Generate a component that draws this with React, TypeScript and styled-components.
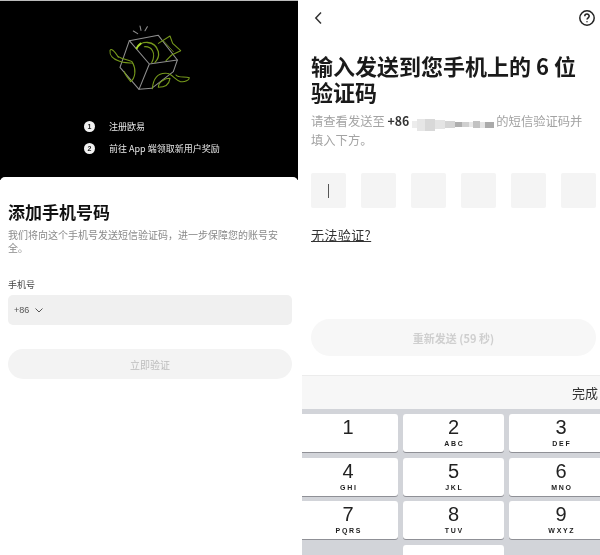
import React from 'react';
import styled, { createGlobalStyle } from 'styled-components';

const GlobalStyle = createGlobalStyle`
  html, body {
    margin: 0;
    padding: 0;
    background: #fff;
  }
  * {
    box-sizing: border-box;
  }
`;

const Page = styled.div`
  display: flex;
  gap: 4px;
  width: 600px;
  height: 555px;
  overflow: hidden;
  background: #fff;
  color: #111;
  font-family: "Noto Sans CJK SC", "Noto Sans", sans-serif;
  filter: blur(0.6px);
`;

const LeftScreen = styled.section`
  display: flex;
  flex-direction: column;
  width: 298px;
  background: #fff;
`;

const Hero = styled.div`
  display: flex;
  flex-direction: column;
  align-items: center;
  height: 180px;
  padding-top: 9px;
  margin-bottom: -3px;
  border-top: 1px solid #bbb;
  background: #000;
`;

const Art = styled.svg`
  width: 120px;
  height: 90px;
  margin-left: 2px;
  flex: none;
`;

const Steps = styled.ol`
  display: flex;
  flex-direction: column;
  gap: 8px;
  align-self: flex-start;
  margin: 19px 0 0 84px;
  padding: 0;
  list-style: none;
`;

const Step = styled.li`
  display: flex;
  align-items: center;
  gap: 14px;
  height: 14px;
  color: #e8e8e8;
  font-size: 9px;
`;

const StepDot = styled.span`
  display: flex;
  align-items: center;
  justify-content: center;
  width: 11px;
  height: 11px;
  border-radius: 50%;
  background: #f2f2f2;
  color: #222;
  font-size: 7px;
  font-weight: 700;
  font-family: "Liberation Sans", sans-serif;
`;

const Sheet = styled.div`
  position: relative;
  flex: 1;
  padding: 24px 6px 0 8px;
  border-radius: 5px 5px 0 0;
  background: #fff;
`;

const SheetTitle = styled.h1`
  margin: 0;
  font-size: 17px;
  line-height: 22px;
  font-weight: 700;
  color: #111;
`;

const SheetNote = styled.p`
  margin: 5px 0 0;
  width: 278px;
  color: #8a8a8a;
  font-size: 10px;
  line-height: 13px;
`;

const FieldLabel = styled.div`
  margin-top: 24px;
  color: #444;
  font-size: 9px;
  line-height: 14px;
`;

const PhoneField = styled.div`
  display: flex;
  align-items: center;
  gap: 5px;
  height: 30px;
  margin-top: 3px;
  padding-left: 6px;
  border-radius: 5px;
  background: #f0f0f0;
  color: #555;
  font-size: 9px;
  font-family: "Liberation Sans", sans-serif;
`;

const WideButton = styled.button<{ $tall?: boolean; $bold?: boolean }>`
  display: block;
  width: 100%;
  height: ${p => (p.$tall ? 37 : 30)}px;
  padding: 0;
  border: none;
  border-radius: ${p => (p.$tall ? 19 : 15)}px;
  background: ${p => (p.$tall ? '#f7f7f7' : '#f3f3f3')};
  color: ${p => (p.$tall ? '#cfcfcf' : '#bdbdbd')};
  font-family: inherit;
  font-size: ${p => (p.$tall ? 11 : 10)}px;
  font-weight: ${p => (p.$bold ? 700 : 400)};
`;

const SheetAction = styled.div`
  margin-top: 24px;
`;

const RightScreen = styled.section`
  display: flex;
  flex-direction: column;
  width: 298px;
`;

const Content = styled.div`
  display: flex;
  flex-direction: column;
  flex: none;
  height: 375px;
  padding: 0 4px 0 9px;
`;

const TopBar = styled.div`
  display: flex;
  align-items: center;
  justify-content: space-between;
  height: 18px;
  margin-top: 9px;
  padding-left: 3px;
  color: #222;
`;

const Heading = styled.h2`
  margin: 25px 0 0;
  font-size: 22px;
  line-height: 26px;
  font-weight: 700;
  color: #1a1a1a;
`;

const Hint = styled.p`
  margin: 8px 0 0;
  width: 280px;
  color: #a3a3a3;
  font-size: 12.3px;
  line-height: 19px;
`;

const Prefix = styled.b`
  color: #333;
  font-weight: 700;
`;

const Mosaic = styled.span`
  display: inline-flex;
  align-items: center;
  width: 82px;
  height: 12px;
  margin: 0 2px 0 3px;
  vertical-align: -2px;
`;

const Patch = styled.i<{ $w: number; $h: number; $tone: string }>`
  display: block;
  flex: none;
  width: ${p => p.$w}px;
  height: ${p => p.$h}px;
  background: ${p => p.$tone};
`;

const CodeRow = styled.div`
  display: flex;
  gap: 15px;
  margin-top: 23px;
`;

const CodeCell = styled.div`
  display: flex;
  align-items: center;
  justify-content: center;
  width: 35px;
  height: 35px;
  border-radius: 2px;
  background: #f4f4f4;
`;

const Caret = styled.span`
  display: block;
  width: 1.5px;
  height: 14px;
  background: #555;
`;

const HelpLink = styled.a`
  align-self: flex-start;
  margin-top: 17px;
  color: #333;
  font-size: 13px;
  line-height: 19px;
  letter-spacing: 0.4px;
  text-decoration: underline;
`;

const ResendWrap = styled.div`
  margin-top: auto;
  margin-bottom: 19px;
`;

const Keyboard = styled.div`
  display: flex;
  flex-direction: column;
  flex: 1;
  overflow: hidden;
  background: #d2d4d9;
`;

const DoneBar = styled.div`
  display: flex;
  flex: none;
  align-items: center;
  justify-content: flex-end;
  height: 34px;
  padding-right: 2px;
  border-top: 1px solid #ececec;
  background: #f7f7f7;
  color: #333;
  font-size: 13px;
`;

const KeyGrid = styled.div`
  display: grid;
  flex: none;
  grid-template-columns: 100px 101px 104px;
  grid-auto-rows: 38px;
  gap: 5.5px 5px;
  margin-left: -4px;
  padding-top: 5px;
`;

const Key = styled.div`
  display: flex;
  flex-direction: column;
  align-items: center;
  padding-top: 3px;
  border-radius: 3px;
  background: #fff;
  box-shadow: 0 1px 0 #8f9096;
  color: #222;
  font-family: "Liberation Sans", sans-serif;
`;

const EmptyKey = styled.div``;

const KeyDigit = styled.span`
  font-size: 20px;
  line-height: 21px;
`;

const KeyLetters = styled.span`
  margin-top: 1px;
  margin-right: -1.7px;
  font-size: 7px;
  line-height: 9px;
  font-weight: 700;
  letter-spacing: 1.7px;
`;

const keys = [
  ['1', ''],
  ['2', 'ABC'],
  ['3', 'DEF'],
  ['4', 'GHI'],
  ['5', 'JKL'],
  ['6', 'MNO'],
  ['7', 'PQRS'],
  ['8', 'TUV'],
  ['9', 'WXYZ'],
];

const patches: [number, number, string][] = [
  [5, 7, '#ececec'],
  [8, 12, '#e6e6e6'],
  [10, 12, '#d8d8d8'],
  [10, 9, '#e4e4e4'],
  [10, 7, '#d4d4d4'],
  [7, 5, '#aeaeae'],
  [7, 5, '#cfcfcf'],
  [4, 5, '#e8e8e8'],
  [7, 7, '#c2c2c2'],
  [5, 6, '#e4e4e4'],
  [9, 6, '#aaaaaa'],
];

const App: React.FC = () => {
  return (
    <>
      <GlobalStyle />
      <Page>
        <LeftScreen>
          <Hero>
            <Art viewBox="0 0 360 270" fill="none" strokeLinecap="round" strokeLinejoin="round">
              <g stroke="#8f8f8f" strokeWidth="3.2">
                <path d="M118 92 L205 76 L262 150 L250 185 L185 235 L147 238 L90 172 Z" />
                <path d="M118 92 L178 162 L262 150 M178 162 L147 238" />
                <path d="M130 63 L143 71 M150 48 L153 61 M172 50 L165 62" />
              </g>
              <g stroke="#76991b" strokeWidth="3.2">
                <path d="M140 115 C150 92 195 88 205 125 C208 140 200 152 195 157" strokeWidth="3.8" />
                <path d="M163 110 C185 108 200 130 185 158" />
                <path d="M205 100 L240 78 L248 100 L272 122 L245 135 L228 152" />
                <path d="M220 92 L250 125" strokeWidth="2.5" />
                <path d="M85 142 C72 120 62 114 60 122 C58 136 70 147 85 152 C100 160 128 158 128 160" />
                <path d="M85 140 C100 150 125 150 128 158 C140 180 135 205 122 215 C115 205 105 195 103 185" />
                <path d="M187 236 C190 205 205 188 230 190 C245 190 255 210 272 215 C285 217 298 210 298 203 C285 198 265 205 258 195" />
                <path d="M205 232 C205 215 225 205 240 205 C238 220 228 232 205 232" />
              </g>
              <path d="M140 115 C143 108 148 104 152 101" stroke="#a6d62a" strokeWidth="6" />
            </Art>
            <Steps>
              <Step><StepDot>1</StepDot>注册欧易</Step>
              <Step><StepDot>2</StepDot>前往 App 端领取新用户奖励</Step>
            </Steps>
          </Hero>
          <Sheet>
            <SheetTitle>添加手机号码</SheetTitle>
            <SheetNote>我们将向这个手机号发送短信验证码，进一步保障您的账号安全。</SheetNote>
            <FieldLabel>手机号</FieldLabel>
            <PhoneField>
              +86
              <svg width="10" height="10" viewBox="0 0 10 10" fill="none" stroke="#555" strokeWidth="1">
                <path d="M1.5 3.5 L5 7 L8.5 3.5" />
              </svg>
            </PhoneField>
            <SheetAction>
              <WideButton>立即验证</WideButton>
            </SheetAction>
          </Sheet>
        </LeftScreen>
        <RightScreen>
          <Content>
            <TopBar>
              <svg width="9" height="14" viewBox="0 0 9 14" fill="none" stroke="#333" strokeWidth="1.5">
                <path d="M7 1.5 L1.8 7 L7 12.5" />
              </svg>
              <svg width="18" height="18" viewBox="0 0 18 18" fill="none" stroke="#222" strokeWidth="1.5">
                <circle cx="9" cy="9" r="7.2" />
                <path d="M6.8 7.2 C6.8 4.4 11.2 4.4 11.2 7.1 C11.2 8.8 9 8.8 9 10.6" />
                <path d="M9 12.3 L9 13.3" />
              </svg>
            </TopBar>
            <Heading>输入发送到您手机上的 6 位<br />验证码</Heading>
            <Hint>
              请查看发送至 <Prefix>+86</Prefix>
              <Mosaic>
                {patches.map(([w, h, tone], i) => (
                  <Patch key={i} $w={w} $h={h} $tone={tone} />
                ))}
              </Mosaic>
              的短信验证码并<br />填入下方。
            </Hint>
            <CodeRow>
              <CodeCell><Caret /></CodeCell>
              <CodeCell />
              <CodeCell />
              <CodeCell />
              <CodeCell />
              <CodeCell />
            </CodeRow>
            <HelpLink>无法验证?</HelpLink>
            <ResendWrap>
              <WideButton $tall $bold>重新发送 (59 秒)</WideButton>
            </ResendWrap>
          </Content>
          <Keyboard>
            <DoneBar>完成</DoneBar>
            <KeyGrid>
              {keys.map(([digit, letters]) => (
                <Key key={digit}>
                  <KeyDigit>{digit}</KeyDigit>
                  <KeyLetters>{letters}</KeyLetters>
                </Key>
              ))}
              <EmptyKey />
              <Key />
              <EmptyKey />
            </KeyGrid>
          </Keyboard>
        </RightScreen>
      </Page>
    </>
  );
};

export default App;
